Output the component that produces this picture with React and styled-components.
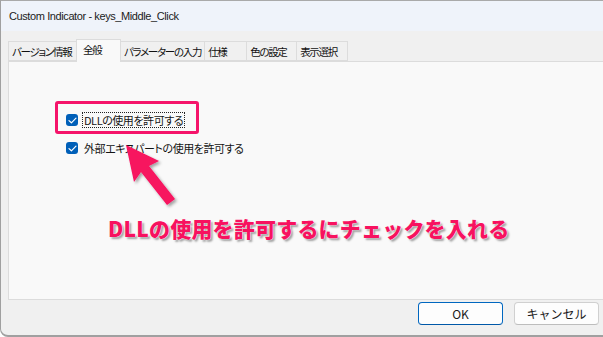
import React from 'react'
import styled, { createGlobalStyle } from 'styled-components'

const GlobalStyle = createGlobalStyle`
html, body {
  margin:0;
  padding:0;
  background:#ffffff;
  overflow:hidden;
}
body {
  font-family:"Noto Sans","Noto Sans CJK JP",sans-serif;
  font-size:12px;
  color:#1a1a1a;
}
`;

const Window = styled.div`
position:relative;
width:614px;
height:334px;
display:flex;
flex-direction:column;
border-top:1px solid #a9a9a9;
border-left:1px solid #a0a0a0;
border-bottom:2px solid #a0a0a0;
border-bottom-left-radius:8px;
background:#f0f0f0;
overflow:hidden;
`;

const TitleBar = styled.div`
height:30px;
display:flex;
align-items:center;
padding-left:8px;
background:#eff3fa;
font-family:"Liberation Sans",Arial,sans-serif;
font-size:11px;
letter-spacing:-0.4px;
color:#1b1b1b;
`;

const Body = styled.div`
flex:1;
display:flex;
flex-direction:column;
padding:8px 0 0 7px;
`;

const TabRow = styled.div`
display:flex;
align-items:flex-end;
height:22px;
font-family:"Noto Sans CJK JP",sans-serif;
font-feature-settings:"palt";
`;

const Tab = styled.div`
box-sizing:border-box;
min-width:${p => p.w}px;
height:${p => (p.active ? 23 : 20)}px;
margin-bottom:${p => (p.active ? -1 : 0)}px;
display:flex;
align-items:center;
padding:0 ${p => (p.active ? 6 : 3)}px ${p => (p.active ? 3 : 0)}px;
background:${p => (p.active ? '#f9f9f9' : '#f0f0f0')};
border:1px solid #dcdcdc;
border-bottom:${p => (p.active ? 'none' : '1px solid #dcdcdc')};
margin-left:${p => (p.first ? 0 : -1)}px;
position:relative;
z-index:${p => (p.active ? 2 : 1)};
font-size:10.5px;
letter-spacing:-1.3px;
white-space:nowrap;
color:#111;
`;

const Panel = styled.div`
position:relative;
height:239px;
background:#f9f9f9;
border:1px solid #dcdcdc;
box-sizing:border-box;
padding:50px 0 0 57px;
display:flex;
flex-direction:column;
gap:12px;
font-family:"Noto Sans CJK JP",sans-serif;
font-feature-settings:"palt";
`;

const CheckRow = styled.label`
display:flex;
align-items:center;
gap:4px;
height:16px;
font-size:11px;
letter-spacing:-0.45px;
color:#141414;
`;

const Box = styled.span`
width:12px;
height:12px;
border-radius:3px;
background:#005fb8;
display:flex;
align-items:center;
justify-content:center;
flex-shrink:0;
`;

const Label = styled.span`
padding:0 1px;
line-height:14px;
border:1px dotted ${p => (p.focus ? '#222' : 'transparent')};
`;

const Highlight = styled.div`
position:absolute;
left:46px;
top:39px;
width:138px;
height:27px;
border:3px solid #f5146a;
border-radius:3px;
`;

const Arrow = styled.svg`
position:absolute;
left:0;
top:0;
overflow:visible;
`;

const Callout = styled.div`
position:absolute;
left:107px;
top:212px;
font-family:"Noto Sans CJK JP",sans-serif;
font-weight:900;
font-size:21px;
letter-spacing:0.2px;
color:#f7125f;
white-space:nowrap;
text-shadow:0 0 1px #fff, 0 0 1px #fff, 2px 2px 2px rgba(0,0,0,0.35);
`;

const Footer = styled.div`
flex:1;
display:flex;
justify-content:flex-start;
gap:11px;
padding:2px 0 0 410px;
font-family:"Noto Sans CJK JP",sans-serif;
font-feature-settings:"palt";
`;

const Button = styled.button`
width:85px;
height:23px;
box-sizing:border-box;
border-radius:4px;
font-family:inherit;
font-size:12px;
color:#1a1a1a;
background:#fdfdfd;
border:1px solid ${p => (p.primary ? '#0067c0' : '#d0d0d0')};
border-bottom-color:${p => (p.primary ? '#0058a8' : '#bdbdbd')};
padding:0;
`;

const Check = () => (
  <svg width="9" height="7" viewBox="0 0 9 7">
    <path d="M1 3.6 L3.4 5.8 L8 1.2" fill="none" stroke="#fff" strokeWidth="1.2" strokeLinecap="round" strokeLinejoin="round" />
  </svg>
);

const tabs = [
  { label: 'バージョン情報', w: 69 },
  { label: '全般', w: 45, active: true },
  { label: 'パラメーターの入力', w: 83 },
  { label: '仕様', w: 43 },
  { label: '色の設定', w: 51 },
  { label: '表示選択', w: 52 },
];

const App = () => {
  return (
    <>
      <GlobalStyle />
      <Window>
        <TitleBar>Custom Indicator - keys_Middle_Click</TitleBar>
        <Body>
          <TabRow>
            {tabs.map((t, i) => (
              <Tab key={t.label} w={t.w} active={t.active} first={i === 0}>{t.label}</Tab>
            ))}
          </TabRow>
          <Panel>
            <CheckRow>
              <Box><Check /></Box>
              <Label focus>DLLの使用を許可する</Label>
            </CheckRow>
            <CheckRow>
              <Box><Check /></Box>
              <Label>外部エキスパートの使用を許可する</Label>
            </CheckRow>
            <Highlight />
          </Panel>
          <Footer>
            <Button primary>OK</Button>
            <Button>キャンセル</Button>
          </Footer>
        </Body>
        <Arrow width="603" height="337">
          <defs>
            <filter id="sh" x="-30%" y="-30%" width="160%" height="160%">
              <feDropShadow dx="2" dy="2" stdDeviation="1.5" floodColor="#000" floodOpacity="0.35" />
            </filter>
          </defs>
          <polygon
            points="126,145 159,161 149,166 175,199 167,205 141,172 134,182"
            fill="#f7125f"
            filter="url(#sh)"
            transform="translate(-1,-1)"
          />
        </Arrow>
        <Callout>DLLの使用を許可するにチェックを入れる</Callout>
      </Window>
    </>
  )
}

export default App
